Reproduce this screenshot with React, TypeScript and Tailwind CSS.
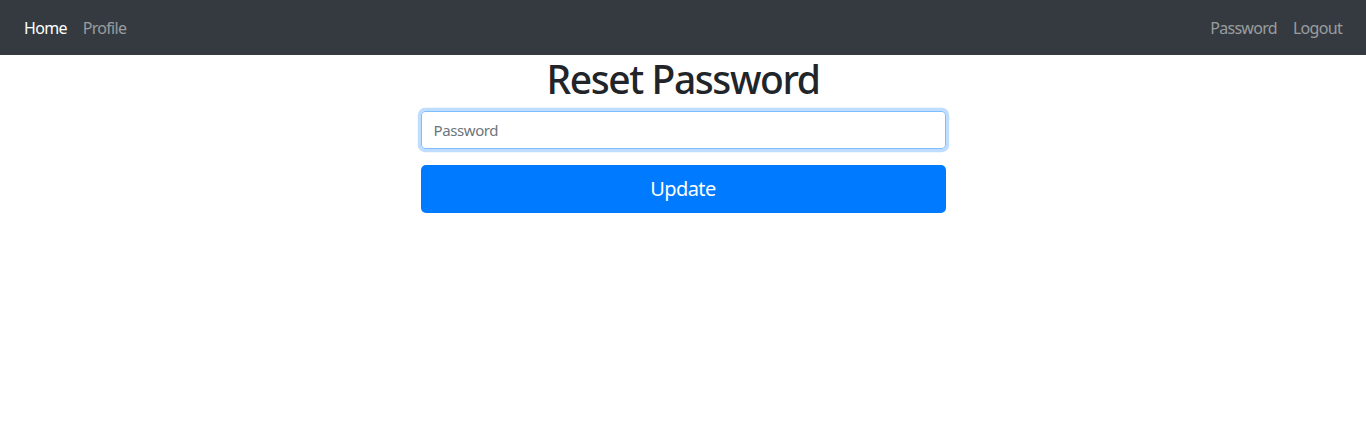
import React from "react";

export default function App() {
  return (
    <div className="min-h-[443px] bg-white" style={{ fontFamily: '"Noto Sans", "Open Sans", sans-serif' }}>
      <nav className="h-[55px] bg-[#343a40] flex items-center justify-between px-4">
        <div className="flex">
          <a className="px-2 text-[16px] leading-6 tracking-[-0.7px] text-white">Home</a>
          <a className="px-2 text-[16px] leading-6 tracking-[-0.7px] text-white/50">Profile</a>
        </div>
        <div className="flex">
          <a className="px-2 text-[16px] leading-6 tracking-[-0.7px] text-white/50">Password</a>
          <a className="px-2 text-[16px] leading-6 tracking-[-0.7px] text-white/50">Logout</a>
        </div>
      </nav>
      <div className="flex flex-col items-center">
        <h1 className="text-[39px] leading-[48px] font-[550] tracking-[-1.4px] text-[#212529] mb-2">Reset Password</h1>
        <div className="w-[525px]">
          <input
            type="text"
            placeholder="Password"
            className="w-full h-[38px] px-3 text-[15px] tracking-[-0.4px] text-[#495057] placeholder:text-[#6c757d] border border-[#80bdff] rounded outline-none shadow-[0_0_0_3.2px_rgba(0,123,255,0.25)] mb-4"
          />
          <button className="w-full h-[48px] bg-[#007bff] text-white text-[20px] tracking-[-0.6px] rounded-[5px]">Update</button>
        </div>
      </div>
    </div>
  );
}
